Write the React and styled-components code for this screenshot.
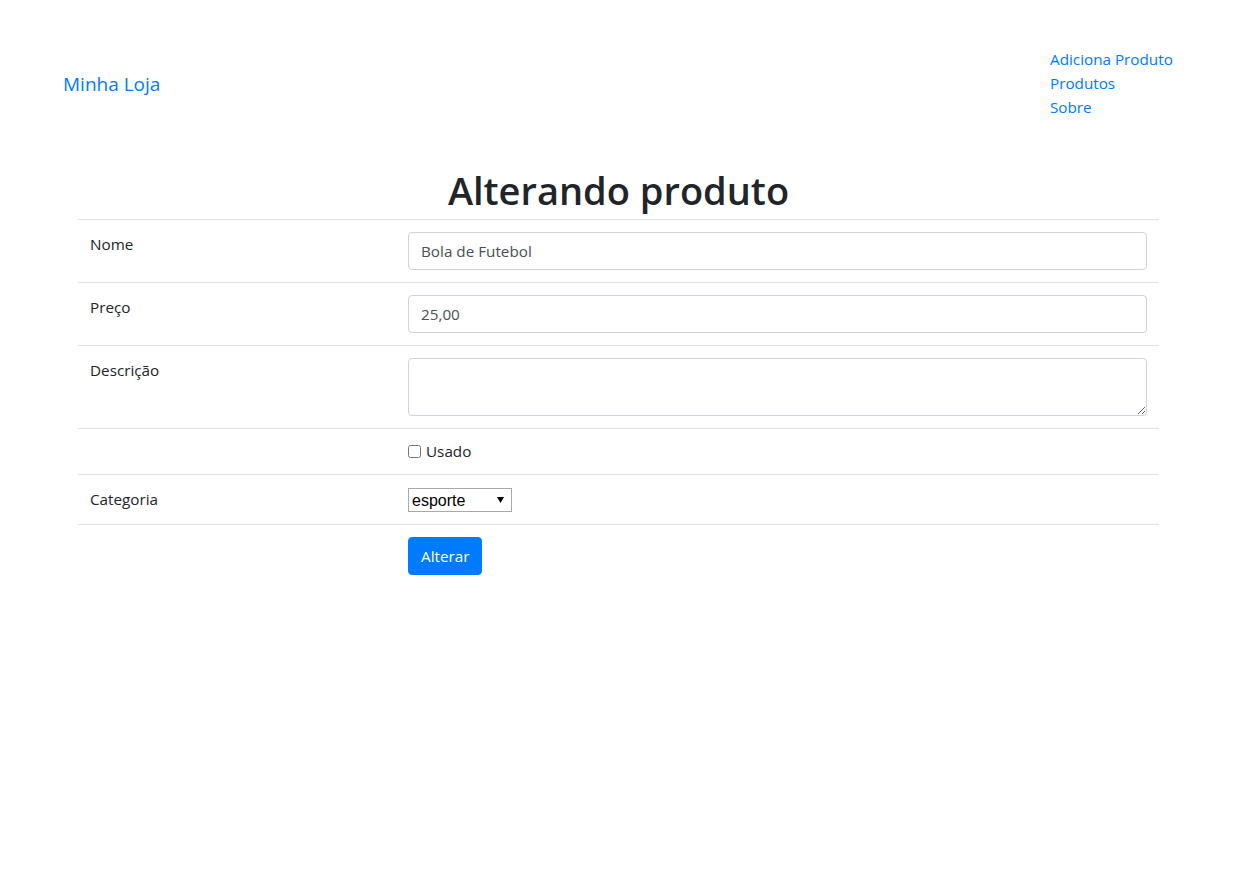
import React from "react";
import styled, { createGlobalStyle } from "styled-components";

const Global = createGlobalStyle`
  html, body { margin: 0; padding: 0; background: #fff; }
  body {
    font-family: "Open Sans", "Noto Sans", sans-serif;
    font-size: 15.25px;
    line-height: 24px;
    color: #212529;
  }
  * { box-sizing: border-box; }
`;

const Header = styled.header`
  display: grid;
  grid-template-columns: 1fr 189px;
  align-items: center;
  padding: 47px 0 0 63px;
`;

const Brand = styled.a`
  color: #007bff;
  font-size: 19px;
  line-height: 30px;
  padding-top: 2px;
  text-decoration: none;
`;

const NavList = styled.ul`
  list-style: none;
  margin: 0;
  padding: 0;
`;

const NavLink = styled.a`
  display: block;
  color: #007bff;
  text-decoration: none;
  line-height: 24px;
`;

const Main = styled.main`
  width: 1081px;
  margin: 0 0 0 78px;
`;

const Title = styled.h1`
  margin: 47px 0 5px;
  font-size: 38px;
  font-weight: 600;
  line-height: 48px;
  text-align: center;
`;

const Table = styled.table`
  width: 100%;
  border-collapse: collapse;
`;

const Row = styled.tr`
  border-top: 1px solid #dee2e6;
`;

const LabelCell = styled.td`
  width: 318px;
  padding: 12px;
  vertical-align: top;
`;

const FieldCell = styled.td`
  padding: 12px;
  vertical-align: top;
`;

const TextInput = styled.input`
  display: block;
  width: 100%;
  height: 38px;
  padding: 6px 12px;
  font: inherit;
  color: #495057;
  border: 1px solid #ced4da;
  border-radius: 4px;
  background: #fff;
`;

const TextArea = styled.textarea`
  display: block;
  width: 100%;
  height: 58px;
  padding: 6px 12px;
  font: inherit;
  color: #495057;
  border: 1px solid #ced4da;
  border-radius: 4px;
  resize: vertical;
`;

const CheckLabel = styled.label`
  display: flex;
  align-items: center;
  gap: 5px;
  height: 21px;
  line-height: 21px;
  input { margin: 0; width: 13px; height: 13px; }
`;

const SelectWrap = styled.span`
  position: relative;
  display: block;
  width: 104px;
  height: 24px;
  margin-top: 1px;
`;

const Select = styled.select`
  display: block;
  width: 104px;
  height: 24px;
  padding: 0 18px 0 3px;
  font-family: "Liberation Sans", Arial, sans-serif;
  font-size: 16px;
  color: #000;
  border: 1px solid #a9a9a9;
  border-radius: 0;
  background: #fff;
  appearance: none;
  -webkit-appearance: none;
`;

const Arrow = styled.svg`
  position: absolute;
  right: 8px;
  top: 9px;
  width: 7px;
  height: 6px;
  pointer-events: none;
`;

const Button = styled.button`
  height: 38px;
  padding: 6px 12px;
  font: inherit;
  color: #fff;
  background: #007bff;
  border: 1px solid #007bff;
  border-radius: 4px;
`;

export default function App() {
  return (
    <>
      <Global />
      <Header>
        <Brand href="#">Minha Loja</Brand>
        <NavList>
          <li><NavLink href="#">Adiciona Produto</NavLink></li>
          <li><NavLink href="#">Produtos</NavLink></li>
          <li><NavLink href="#">Sobre</NavLink></li>
        </NavList>
      </Header>
      <Main>
        <Title>Alterando produto</Title>
        <Table>
          <tbody>
            <Row>
              <LabelCell>Nome</LabelCell>
              <FieldCell><TextInput defaultValue="Bola de Futebol" /></FieldCell>
            </Row>
            <Row>
              <LabelCell>Preço</LabelCell>
              <FieldCell><TextInput defaultValue="25,00" /></FieldCell>
            </Row>
            <Row>
              <LabelCell>Descrição</LabelCell>
              <FieldCell><TextArea /></FieldCell>
            </Row>
            <Row>
              <LabelCell />
              <FieldCell>
                <CheckLabel><input type="checkbox" /> Usado</CheckLabel>
              </FieldCell>
            </Row>
            <Row>
              <LabelCell>Categoria</LabelCell>
              <FieldCell>
                <SelectWrap>
                  <Select defaultValue="esporte">
                    <option value="esporte">esporte</option>
                    <option value="escolar">escolar</option>
                    <option value="cozinha">cozinha</option>
                  </Select>
                  <Arrow viewBox="0 0 7 6"><path d="M0 0H7L3.5 6Z" fill="#000" /></Arrow>
                </SelectWrap>
              </FieldCell>
            </Row>
            <Row>
              <LabelCell />
              <FieldCell><Button>Alterar</Button></FieldCell>
            </Row>
          </tbody>
        </Table>
      </Main>
    </>
  );
}
